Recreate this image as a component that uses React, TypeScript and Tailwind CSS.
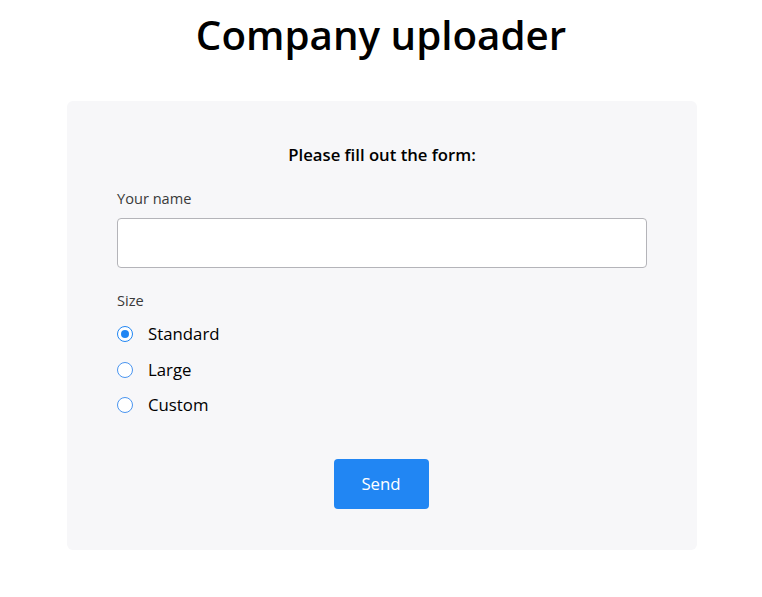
import { useState } from 'react';

const sizes = ['Standard', 'Large', 'Custom'];

export default function App() {
  const [size, setSize] = useState('Standard');
  const [name, setName] = useState('');

  return (
    <div className="min-h-screen bg-white text-black font-['Open_Sans',sans-serif]">
      <h1 className="text-center text-[40.3px] font-semibold leading-none pt-[15px]">Company uploader</h1>

      <div className="mx-auto mt-[46px] w-[630px] translate-x-[1px] rounded-md bg-[#f7f7f9] px-[50px] pt-[43px] pb-[41px]">
        <p className="text-center text-[16.7px] font-semibold leading-[22px]">Please fill out the form:</p>

        <label className="mt-[22px] block text-[14.6px] leading-[20px] text-[#3a3a3a]">Your name</label>
        <input
          value={name}
          onChange={(e) => setName(e.target.value)}
          className="mt-[10px] block h-[50px] w-full rounded border border-[#b4b4b9] bg-white px-3 text-[16px] outline-none"
        />

        <div className="mt-[22px] text-[14.6px] leading-[20px] text-[#3a3a3a]">Size</div>
        <div className="mt-[6px] flex flex-col">
          {sizes.map((s) => (
            <label key={s} className="flex h-[35.5px] items-center gap-[15px] cursor-pointer">
              <span
                className={
                  'flex h-[16px] w-[16px] items-center justify-center rounded-full border-[1.5px] bg-white ' +
                  (size === s ? 'border-[#2186f3]' : 'border-[#4a95f0]')
                }
                onClick={() => setSize(s)}
              >
                {size === s && <span className="h-[8px] w-[8px] rounded-full bg-[#2186f3]" />}
              </span>
              <span className="text-[16.8px] leading-[22px]" onClick={() => setSize(s)}>{s}</span>
            </label>
          ))}
        </div>

        <div className="mt-[36px] flex justify-center">
          <button className="h-[50px] w-[95px] -translate-x-[1px] rounded bg-[#2186f3] text-[16.8px] text-white">Send</button>
        </div>
      </div>
    </div>
  );
}
